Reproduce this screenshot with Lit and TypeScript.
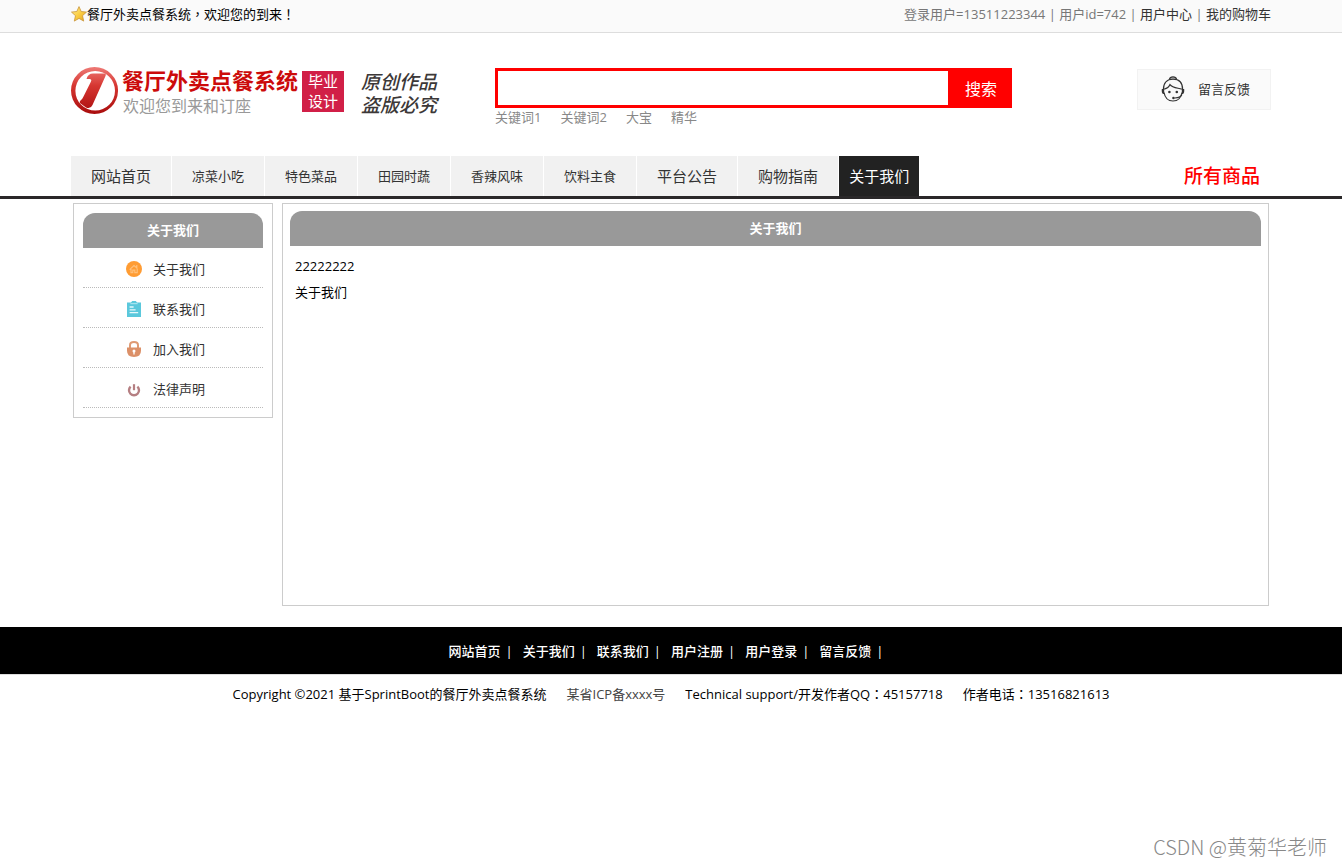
import { LitElement, html, css, svg } from "lit";
import { customElement, state } from "lit/decorators.js";
import { classMap } from "lit/directives/class-map.js";

interface NavItem {
  label: string;
  kind: "main" | "category" | "current";
}

const NAV: NavItem[] = [
  { label: "网站首页", kind: "main" },
  { label: "凉菜小吃", kind: "category" },
  { label: "特色菜品", kind: "category" },
  { label: "田园时蔬", kind: "category" },
  { label: "香辣风味", kind: "category" },
  { label: "饮料主食", kind: "category" },
  { label: "平台公告", kind: "main" },
  { label: "购物指南", kind: "main" },
  { label: "关于我们", kind: "current" },
];

const KEYWORDS = ["关键词1", "关键词2", "大宝", "精华"];

const FOOTER_LINKS = ["网站首页", "关于我们", "联系我们", "用户注册", "用户登录", "留言反馈"];

const homeIcon = html`<svg class="side-icon" viewBox="0 0 16 16" aria-hidden="true">
  ${svg`<circle cx="8" cy="8" r="8" fill="#ff9c33"/>
  <path d="M3.6 8.6 8 4.6l3.2 2.6M10.8 4v3M5 8v3.6h1.8V9.2h2v2.4h2.4V7.6" fill="none" stroke="#ffc07a" stroke-width="1.2"/>`}
</svg>`;

const clipboardIcon = html`<svg class="side-icon" viewBox="0 0 16 16" aria-hidden="true">
  ${svg`<path d="M1 1.6h4L6.2 0h3.6L11 1.6h4V16H1z" fill="#5bc8dc"/>
  <path d="M4.4 2.6h7.2" stroke="#a6e3ee" stroke-width="1.2"/>
  <path d="M3.6 6h4M3.6 8.8h6M3.6 11.6h8.6" stroke="#e6f8fb" stroke-width="1.3"/>`}
</svg>`;

const lockIcon = html`<svg class="side-icon" viewBox="0 0 16 16" aria-hidden="true">
  ${svg`<path d="M4 7.4V4.2Q4 1 8 1t4 3.2v3.2" fill="none" stroke="#df9a73" stroke-width="2"/>
  <path d="M1 6.6h14v3.2q0 6.2-7 6.2t-7-6.2z" fill="#dc9068"/>
  <circle cx="8" cy="10" r="1.5" fill="#fff"/><path d="M8 10v3.4" stroke="#fff" stroke-width="1.3"/>`}
</svg>`;

const powerIcon = html`<svg class="side-icon" viewBox="0 0 16 16" aria-hidden="true">
  ${svg`<path d="M4.6 5.6a5 5 0 1 0 6.8 0" fill="none" stroke="#b57f82" stroke-width="2.4"/>
  <path d="M8 3.2v6" stroke="#b57f82" stroke-width="2.2"/>`}
</svg>`;

const SIDE = [
  { label: "关于我们", icon: homeIcon },
  { label: "联系我们", icon: clipboardIcon },
  { label: "加入我们", icon: lockIcon },
  { label: "法律声明", icon: powerIcon },
];

const starIcon = html`<svg class="star" viewBox="0 0 16 16" aria-hidden="true">
  ${svg`<defs><linearGradient id="gold" x1="0" y1="0" x2="1" y2="1">
    <stop offset="0" stop-color="#fff0a0"/><stop offset=".5" stop-color="#fbcf45"/><stop offset="1" stop-color="#e5a11c"/>
  </linearGradient></defs>
  <path d="M8 .6 10.2 5.5l5.3.6-4 3.6 1.2 5.4L8 12.4l-4.7 2.7 1.2-5.4-4-3.6 5.3-.6z" fill="url(#gold)" stroke="#c9963a" stroke-width=".8" stroke-linejoin="round"/>`}
</svg>`;

const brandIcon = html`<svg class="mark" viewBox="0 0 47 47" aria-hidden="true">
  ${svg`<defs><linearGradient id="ruby" gradientUnits="userSpaceOnUse" x1="0" y1="0" x2="0" y2="47">
    <stop offset="0" stop-color="#ee7a76"/><stop offset=".4" stop-color="#d63631"/><stop offset="1" stop-color="#a90d0d"/>
  </linearGradient></defs>
  <path fill-rule="evenodd" d="M23.5 0a23.5 23.5 0 1 1 0 47a23.5 23.5 0 0 1 0-47zM24.2 4a19.8 19.8 0 1 0 0 39.6a19.8 19.8 0 0 0 0-39.6z" fill="url(#ruby)"/>
  <path d="M15.5 12Q17 6.500 22 6.500h11.500q2 0 1 2.500L21.500 38Q19.500 42.500 15 40.500L9.500 36.500q-1.800-1.500.5-3.500 1.500-1.200 2.500-3.500L20 14.500q1-2.300-1.500-2.500z" fill="url(#ruby)"/>`}
</svg>`;

const agentIcon = html`<svg class="agent" viewBox="0 0 24 26" aria-hidden="true">
  ${svg`<g fill="none" stroke="#333" stroke-width="1.2">
    <path d="M8.5 3.2Q9 .8 12 .8t3.5 2.4" fill="#ccc"/>
    <path d="M2.4 13.5C2.4 7 6 3.2 12 3.2s9.6 3.8 9.6 10.3"/>
    <path d="M3 16.5C4 22 7.5 25 12 25s8-3 9-8.5"/>
    <path d="M3.2 13.2C6 12.5 8 11 9 8.6c2.5 3.2 7 3.2 11.8 4.6"/>
    <path d="M21 18.5q-1.5 3.2-7 3.5"/>
  </g>
  <path d="M.8 13h2.4v5H2Q.4 17 .8 13zM23.2 13h-2.4v5H22q1.6-1 1.200-5z" fill="#333"/>
  <circle cx="8.4" cy="16" r="1.3" fill="#333"/><circle cx="15.8" cy="16" r="1.3" fill="#333"/>
  <circle cx="12.5" cy="22" r="1.3" fill="#333"/>`}
</svg>`;

@customElement("app-root")
export class AppRoot extends LitElement {
  @state() private query = "";

  static styles = css`
    :host {
      display: block;
      position: relative;
      min-height: 100vh;
      background: #fff;
      color: #000;
      font: 13px/26px "Open Sans", "Noto Sans CJK SC", sans-serif;
    }
    * {
      box-sizing: border-box;
    }
    a {
      color: #333;
      text-decoration: none;
    }
    ul,
    h1,
    h2,
    p {
      margin: 0;
      padding: 0;
      list-style: none;
    }
    svg {
      display: block;
      flex: none;
    }
    .mid {
      font-family: "Noto Sans CJK TC", sans-serif;
    }
    .wrap {
      max-width: 1200px;
      margin: 0 auto;
      display: flex;
    }
    .topbar {
      background: #fafafa;
      border-bottom: 1px solid #ddd;
      padding-bottom: 4px;
      line-height: 28px;
    }
    .topbar .wrap {
      justify-content: space-between;
    }
    .welcome {
      display: flex;
      align-items: center;
    }
    .star {
      width: 16px;
      height: 16px;
    }
    .account {
      color: #777;
    }
    .header {
      padding: 34px 0 30px;
      align-items: flex-start;
    }
    .brand {
      display: flex;
      align-items: flex-start;
      white-space: nowrap;
    }
    .mark {
      width: 47px;
      height: 47px;
    }
    .names {
      margin: 0 4px;
    }
    .title {
      font-size: 22px;
      line-height: 27px;
      font-weight: 700;
      color: #cc0b0b;
    }
    .slogan {
      padding-left: 1px;
      font-size: 16px;
      line-height: 24px;
      color: #999;
    }
    .badge {
      margin-top: 4px;
      padding: 0 6px 1px;
      background: #d11f47;
      color: #fff;
      font-size: 15px;
      line-height: 20px;
    }
    .motto {
      margin: 2px 0 0 17px;
      font-family: "Noto Sans CJK SC", sans-serif;
      font-size: 19px;
      line-height: 23px;
      font-style: italic;
      font-weight: 500;
      color: #3c3838;
    }
    .badge span,
    .motto span {
      display: block;
    }
    .search {
      flex: 0 1 517px;
      margin: 1px 0 0 58px;
    }
    .bar {
      display: flex;
      height: 40px;
    }
    .bar input {
      flex: 1;
      min-width: 0;
      border: 3px solid #f00;
      border-right: 0;
      padding: 0 8px;
      font: inherit;
      font-size: 16px;
      outline: 0;
    }
    .bar button {
      width: 64px;
      border: 0;
      padding: 2px 0 0 2px;
      background: #f00;
      color: #fff;
      font: inherit;
      font-size: 16px;
      cursor: pointer;
    }
    .keywords {
      display: flex;
      gap: 19px;
      line-height: 18px;
    }
    .keywords a {
      color: #888;
    }
    .feedback {
      display: flex;
      align-items: center;
      gap: 13px;
      margin: 2px 0 0 auto;
      padding: 0 20px 2px 23px;
      height: 41px;
      border: 1px solid #f2f2f2;
      background: #fafafa;
    }
    .agent {
      width: 24px;
      height: 26px;
    }
    .nav {
      border-bottom: 3px solid #2a2829;
    }
    .nav .wrap {
      justify-content: space-between;
    }
    .tabs {
      display: flex;
      gap: 1px;
      line-height: 40px;
      white-space: nowrap;
    }
    .tabs a {
      display: block;
      padding: 0 20px;
      background: #f1f1f1;
      font-size: 15px;
    }
    .tabs a.category {
      font-size: 13px;
    }
    .tabs a.current {
      padding: 0 10px;
      background: #222;
      color: #fff;
    }
    .all {
      padding-right: 11px;
      font-size: 19px;
      line-height: 40px;
      color: #f00;
      white-space: nowrap;
      font-weight: 500;
    }
    .main {
      padding: 4px 2px 0;
      gap: 9px;
      align-items: flex-start;
    }
    .side,
    .content {
      border: 1px solid #ccc;
    }
    .side {
      flex: 0 0 200px;
      padding: 9px;
    }
    .content {
      flex: 1;
      min-height: 403px;
      padding: 7px;
    }
    .heading {
      border-radius: 12px 12px 0 0;
      background: #999;
      color: #fff;
      font-size: 13px;
      line-height: 35px;
      font-weight: 700;
      text-align: center;
    }
    .side a {
      display: flex;
      align-items: center;
      justify-content: center;
      gap: 11px;
      height: 40px;
      padding: 2px 15px 0 0;
      border-bottom: 1px dotted #bbb;
    }
    .side-icon {
      width: 16px;
      height: 16px;
    }
    .article {
      padding: 7px 5px;
    }
    .footnav {
      margin-top: 21px;
      padding: 11px 0 9px;
      background: #000;
      color: #fff;
      border-bottom: 1px solid #ddd;
    }
    .footnav ul {
      display: flex;
      flex-wrap: wrap;
      justify-content: center;
      line-height: 27px;
      font-weight: 500;
    }
    .footnav li {
      padding-right: 10px;
    }
    .footnav a {
      padding-right: 5px;
      color: #fff;
    }
    .copyright {
      display: flex;
      flex-wrap: wrap;
      justify-content: center;
      gap: 0 20px;
      padding: 6px 0;
    }
    .copyright a {
      color: #444;
    }
    .watermark {
      position: absolute;
      right: 15px;
      bottom: 7px;
      font-family: "Noto Sans CJK SC", sans-serif;
      font-size: 20px;
      font-weight: 300;
      color: #888;
    }
  `;

  private onInput(e: Event) {
    this.query = (e.target as HTMLInputElement).value;
  }

  render() {
    return html`
      <div class="topbar">
        <div class="wrap">
          <div class="welcome">
            ${starIcon}<span>餐厅外卖点餐系统<span class="mid">，</span>欢迎您的到来<span class="mid">！</span></span>
          </div>
          <div class="account">
            登录用户=13511223344 | 用户id=742 | <a href="#">用户中心</a> | <a href="#">我的购物车</a>
          </div>
        </div>
      </div>

      <header class="wrap header">
        <div class="brand">
          ${brandIcon}
          <div class="names">
            <h1 class="title">餐厅外卖点餐系统</h1>
            <p class="slogan">欢迎您到来和订座</p>
          </div>
          <p class="badge"><span>毕业</span><span>设计</span></p>
          <p class="motto"><span>原创作品</span><span>盗版必究</span></p>
        </div>
        <form class="search" @submit=${(e: Event) => e.preventDefault()}>
          <div class="bar">
            <input type="text" aria-label="搜索" .value=${this.query} @input=${this.onInput} />
            <button type="submit">搜索</button>
          </div>
          <div class="keywords">${KEYWORDS.map((k) => html`<a href="#">${k}</a>`)}</div>
        </form>
        <a class="feedback" href="#">${agentIcon}<span>留言反馈</span></a>
      </header>

      <nav class="nav">
        <div class="wrap">
          <ul class="tabs">
            ${NAV.map(
              (n) => html`<li><a href="#" class=${classMap({ [n.kind]: true })}>${n.label}</a></li>`
            )}
          </ul>
          <a class="all" href="#">所有商品</a>
        </div>
      </nav>

      <main class="wrap main">
        <aside class="side">
          <h2 class="heading">关于我们</h2>
          <ul>
            ${SIDE.map((s) => html`<li><a href="#">${s.icon}<span>${s.label}</span></a></li>`)}
          </ul>
        </aside>
        <section class="content">
          <h2 class="heading">关于我们</h2>
          <div class="article">
            <p>22222222</p>
            <p>关于我们</p>
          </div>
        </section>
      </main>

      <footer>
        <div class="footnav">
          <ul>
            ${FOOTER_LINKS.map((l) => html`<li><a href="#">${l}</a>|</li>`)}
          </ul>
        </div>
        <div class="copyright">
          <span>Copyright ©2021 基于SprintBoot的餐厅外卖点餐系统</span>
          <a href="#">某省ICP备xxxx号</a>
          <span>Technical support/开发作者QQ<span class="mid">：</span>45157718</span>
          <span>作者电话<span class="mid">：</span>13516821613</span>
        </div>
      </footer>
      <div class="watermark">CSDN @黄菊华老师</div>
    `;
  }
}
